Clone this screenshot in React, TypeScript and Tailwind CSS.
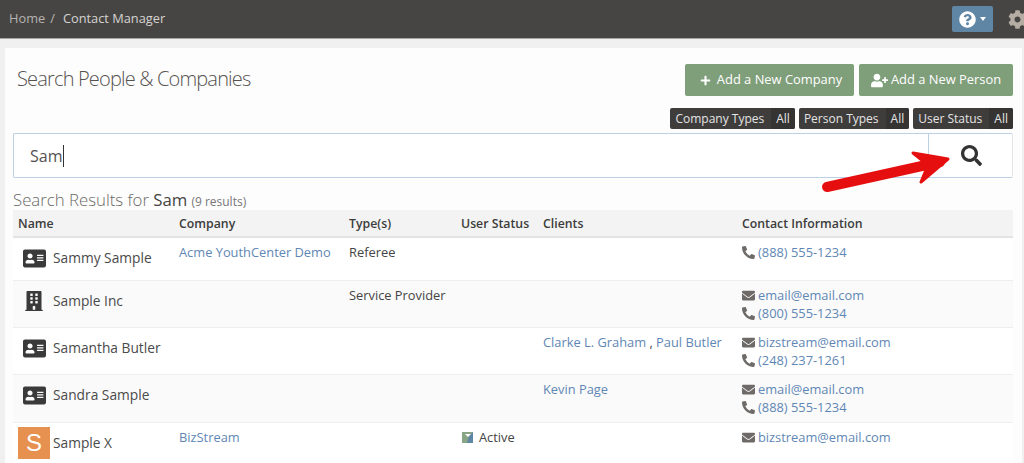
import { FaPhoneAlt, FaEnvelope, FaBuilding, FaAddressCard, FaCog, FaQuestionCircle, FaUserPlus, FaSearch, FaPlus } from 'react-icons/fa';

const LINK = 'text-[#5f87b5]';

interface ResultRow {
  name: string;
  icon: 'person' | 'company' | 'avatar';
  company?: string;
  types?: string;
  status?: string;
  clients?: string[];
  email?: string;
  phone?: string;
  height: string;
  bg: string;
}

const ROWS: ResultRow[] = [
  { name: 'Sammy Sample', icon: 'person', company: 'Acme YouthCenter Demo', types: 'Referee', phone: '(888) 555-1234', height: 'h-[43px]', bg: 'bg-white' },
  { name: 'Sample Inc', icon: 'company', types: 'Service Provider', email: 'email@email.com', phone: '(800) 555-1234', height: 'h-[47px]', bg: 'bg-[#fafafa]' },
  { name: 'Samantha Butler', icon: 'person', clients: ['Clarke L. Graham', 'Paul Butler'], email: 'bizstream@email.com', phone: '(248) 237-1261', height: 'h-[47px]', bg: 'bg-white' },
  { name: 'Sandra Sample', icon: 'person', clients: ['Kevin Page'], email: 'email@email.com', phone: '(888) 555-1234', height: 'h-[48px]', bg: 'bg-[#fafafa]' },
  { name: 'Sample X', icon: 'avatar', company: 'BizStream', status: 'Active', email: 'bizstream@email.com', height: 'h-[42px]', bg: 'bg-white' },
];

function FilterPill({ label }: { label: string }) {
  return (
    <div className="flex h-[21px] items-center rounded-[2px] bg-[#3f3d3c] pl-[5px] text-[12px] text-[#e4e4e4]">
      <span>{label}</span>
      <span className="ml-[7px] flex h-full items-center rounded-r-[2px] bg-[#353433] px-[5px]">All</span>
    </div>
  );
}

function NameIcon({ kind }: { kind: ResultRow['icon'] }) {
  if (kind === 'avatar') {
    return (
      <div className="flex h-[32px] w-[32px] items-center justify-center bg-[#e79150] font-['Liberation_Sans',sans-serif] text-[24px] leading-none text-white">S</div>
    );
  }
  return (
    <div className="flex w-[32px] justify-center text-[#3a3a3a]">
      {kind === 'company' ? <FaBuilding size={20} /> : <FaAddressCard size={23} />}
    </div>
  );
}

function ContactLine({ type, value }: { type: 'mail' | 'phone'; value: string }) {
  return (
    <div className="flex h-[18.5px] items-center">
      <span className="flex w-[16px] shrink-0 text-[#6d6a68]">
        {type === 'mail' ? <FaEnvelope size={13} /> : <FaPhoneAlt size={13} />}
      </span>
      <span className={LINK}>{value}</span>
    </div>
  );
}

export default function App() {
  return (
    <div className="relative h-[463px] w-[1024px] overflow-hidden bg-[#f0f0f0] font-['Open_Sans',sans-serif] text-[13px] text-[#444]">
      {/* Top bar */}
      <div className="flex h-[39px] items-center justify-between border-b border-[#a9a7a5] bg-[#474543] pl-[9px]">
        <div className="flex items-center text-[12.8px]">
          <span className="text-[#b5b3b1]">Home</span>
          <span className="ml-[5px] text-[#b5b3b1]">/</span>
          <span className="ml-[8px] text-[#d5d3d1]">Contact Manager</span>
        </div>
        <div className="flex items-center">
          <div className="flex h-[26px] w-[41px] items-center justify-center gap-[4px] rounded-[2px] bg-[#5f86a5] text-white">
            <FaQuestionCircle size={17} />
            <span className="h-0 w-0 border-x-[3.5px] border-t-[4px] border-x-transparent border-t-white" />
          </div>
          <div className="ml-[15px] w-[16px] text-[#b5ada3]">
            <FaCog size={19} />
          </div>
        </div>
      </div>

      {/* Panel */}
      <div className="ml-[5px] mr-[2px] mt-[9px] h-[420px] bg-[#fdfdfd] pl-[8px] pr-[9px]">
        <div className="flex items-start justify-between pt-[16px]">
          <h1 className="pl-[4px] pt-[1px] text-[20px] font-light leading-[28px] tracking-[-0.83px] text-[#55524f]">Search People &amp; Companies</h1>
          <div className="flex gap-[5px]">
            <div className="flex h-[32px] w-[169px] items-center justify-center gap-[6px] rounded-[2px] bg-[#7f9e7a] pl-[3px] text-[12.9px] text-white">
              <FaPlus size={11} />
              Add a New Company
            </div>
            <div className="flex h-[32px] w-[154px] items-center justify-center gap-[3px] rounded-[2px] bg-[#7f9e7a] text-[12.9px] text-white">
              <FaUserPlus size={17} />
              Add a New Person
            </div>
          </div>
        </div>

        <div className="mt-[12px] flex justify-end gap-[4px]">
          <FilterPill label="Company Types" />
          <FilterPill label="Person Types" />
          <FilterPill label="User Status" />
        </div>

        {/* Search box */}
        <div className="mt-[4px] flex h-[45px] rounded-[2px] border border-[#bcd2e4] border-r-[#e6e6e6] bg-white">
          <div className="flex flex-1 items-center border-r border-[#bcd2e4] pl-[16px] text-[16px] text-[#55524f]">
            Sam<span className="ml-[1px] h-[22px] w-px bg-[#333]" />
          </div>
          <div className="flex w-[83px] items-center justify-center pl-[2px] text-[#333]">
            <FaSearch size={21} />
          </div>
        </div>

        <div className="mt-[12px] flex h-[20px] items-baseline text-[16.8px] font-light leading-[20px] text-[#6b6966]">
          Search Results for&nbsp;<span className="font-normal text-[#444]">Sam</span>
          <span className="ml-[4px] text-[12px] font-normal text-[#777]">(9 results)</span>
        </div>

        {/* Results table */}
        <div className="grid h-[28px] grid-cols-[161px_170px_112px_82px_199px_1fr] items-center border-b-2 border-[#e3e3e3] bg-[#f3f3f3] pl-[5px] pt-[3px] text-[12.3px] font-semibold text-[#3c3c3c]">
          <span>Name</span>
          <span>Company</span>
          <span>Type(s)</span>
          <span>User Status</span>
          <span>Clients</span>
          <span>Contact Information</span>
        </div>
        {ROWS.map((row) => (
          <div key={row.name} className={`grid grid-cols-[161px_170px_112px_82px_199px_1fr] border-b border-[#eeeeee] pl-[5px] text-[12.85px] ${row.height} ${row.bg}`}>
            <div className="flex h-[40px] items-center gap-[3px] text-[13.75px] text-[#4a4a4a]">
              <NameIcon kind={row.icon} />
              {row.name}
            </div>
            <div className={`pt-[5px] ${LINK}`}>{row.company}</div>
            <div className="pt-[5px]">{row.types}</div>
            <div className="pt-[5px]">
              {row.status && (
                <span className="flex items-center gap-[6px]">
                  <svg width="11" height="11" viewBox="0 0 11 11" className="ml-[1px]">
                    <rect width="11" height="11" fill="#5f86a5" />
                    <path d="M0 0h11L7 4 5 11H0z" fill="#8aa586" />
                    <path d="M3 2h6L6 5z" fill="#fff" />
                  </svg>
                  {row.status}
                </span>
              )}
            </div>
            <div className="pt-[5px]">
              {row.clients?.map((client, i) => (
                <span key={client}>
                  {i > 0 && ' , '}
                  <span className={LINK}>{client}</span>
                </span>
              ))}
            </div>
            <div className="pt-[5px]">
              {row.email && <ContactLine type="mail" value={row.email} />}
              {row.phone && <ContactLine type="phone" value={row.phone} />}
            </div>
          </div>
        ))}
      </div>

      {/* Annotation arrow */}
      <svg className="absolute left-[815px] top-[145px]" width="145" height="50" viewBox="0 0 145 50">
        <path d="M12 42 L125 17" stroke="#e60f0f" strokeWidth="10" strokeLinecap="round" fill="none" />
        <path d="M98 8 L133 14 L106 37 L113 20 Z" fill="#e60f0f" stroke="#e60f0f" strokeWidth="3" strokeLinejoin="round" />
      </svg>
    </div>
  );
}
